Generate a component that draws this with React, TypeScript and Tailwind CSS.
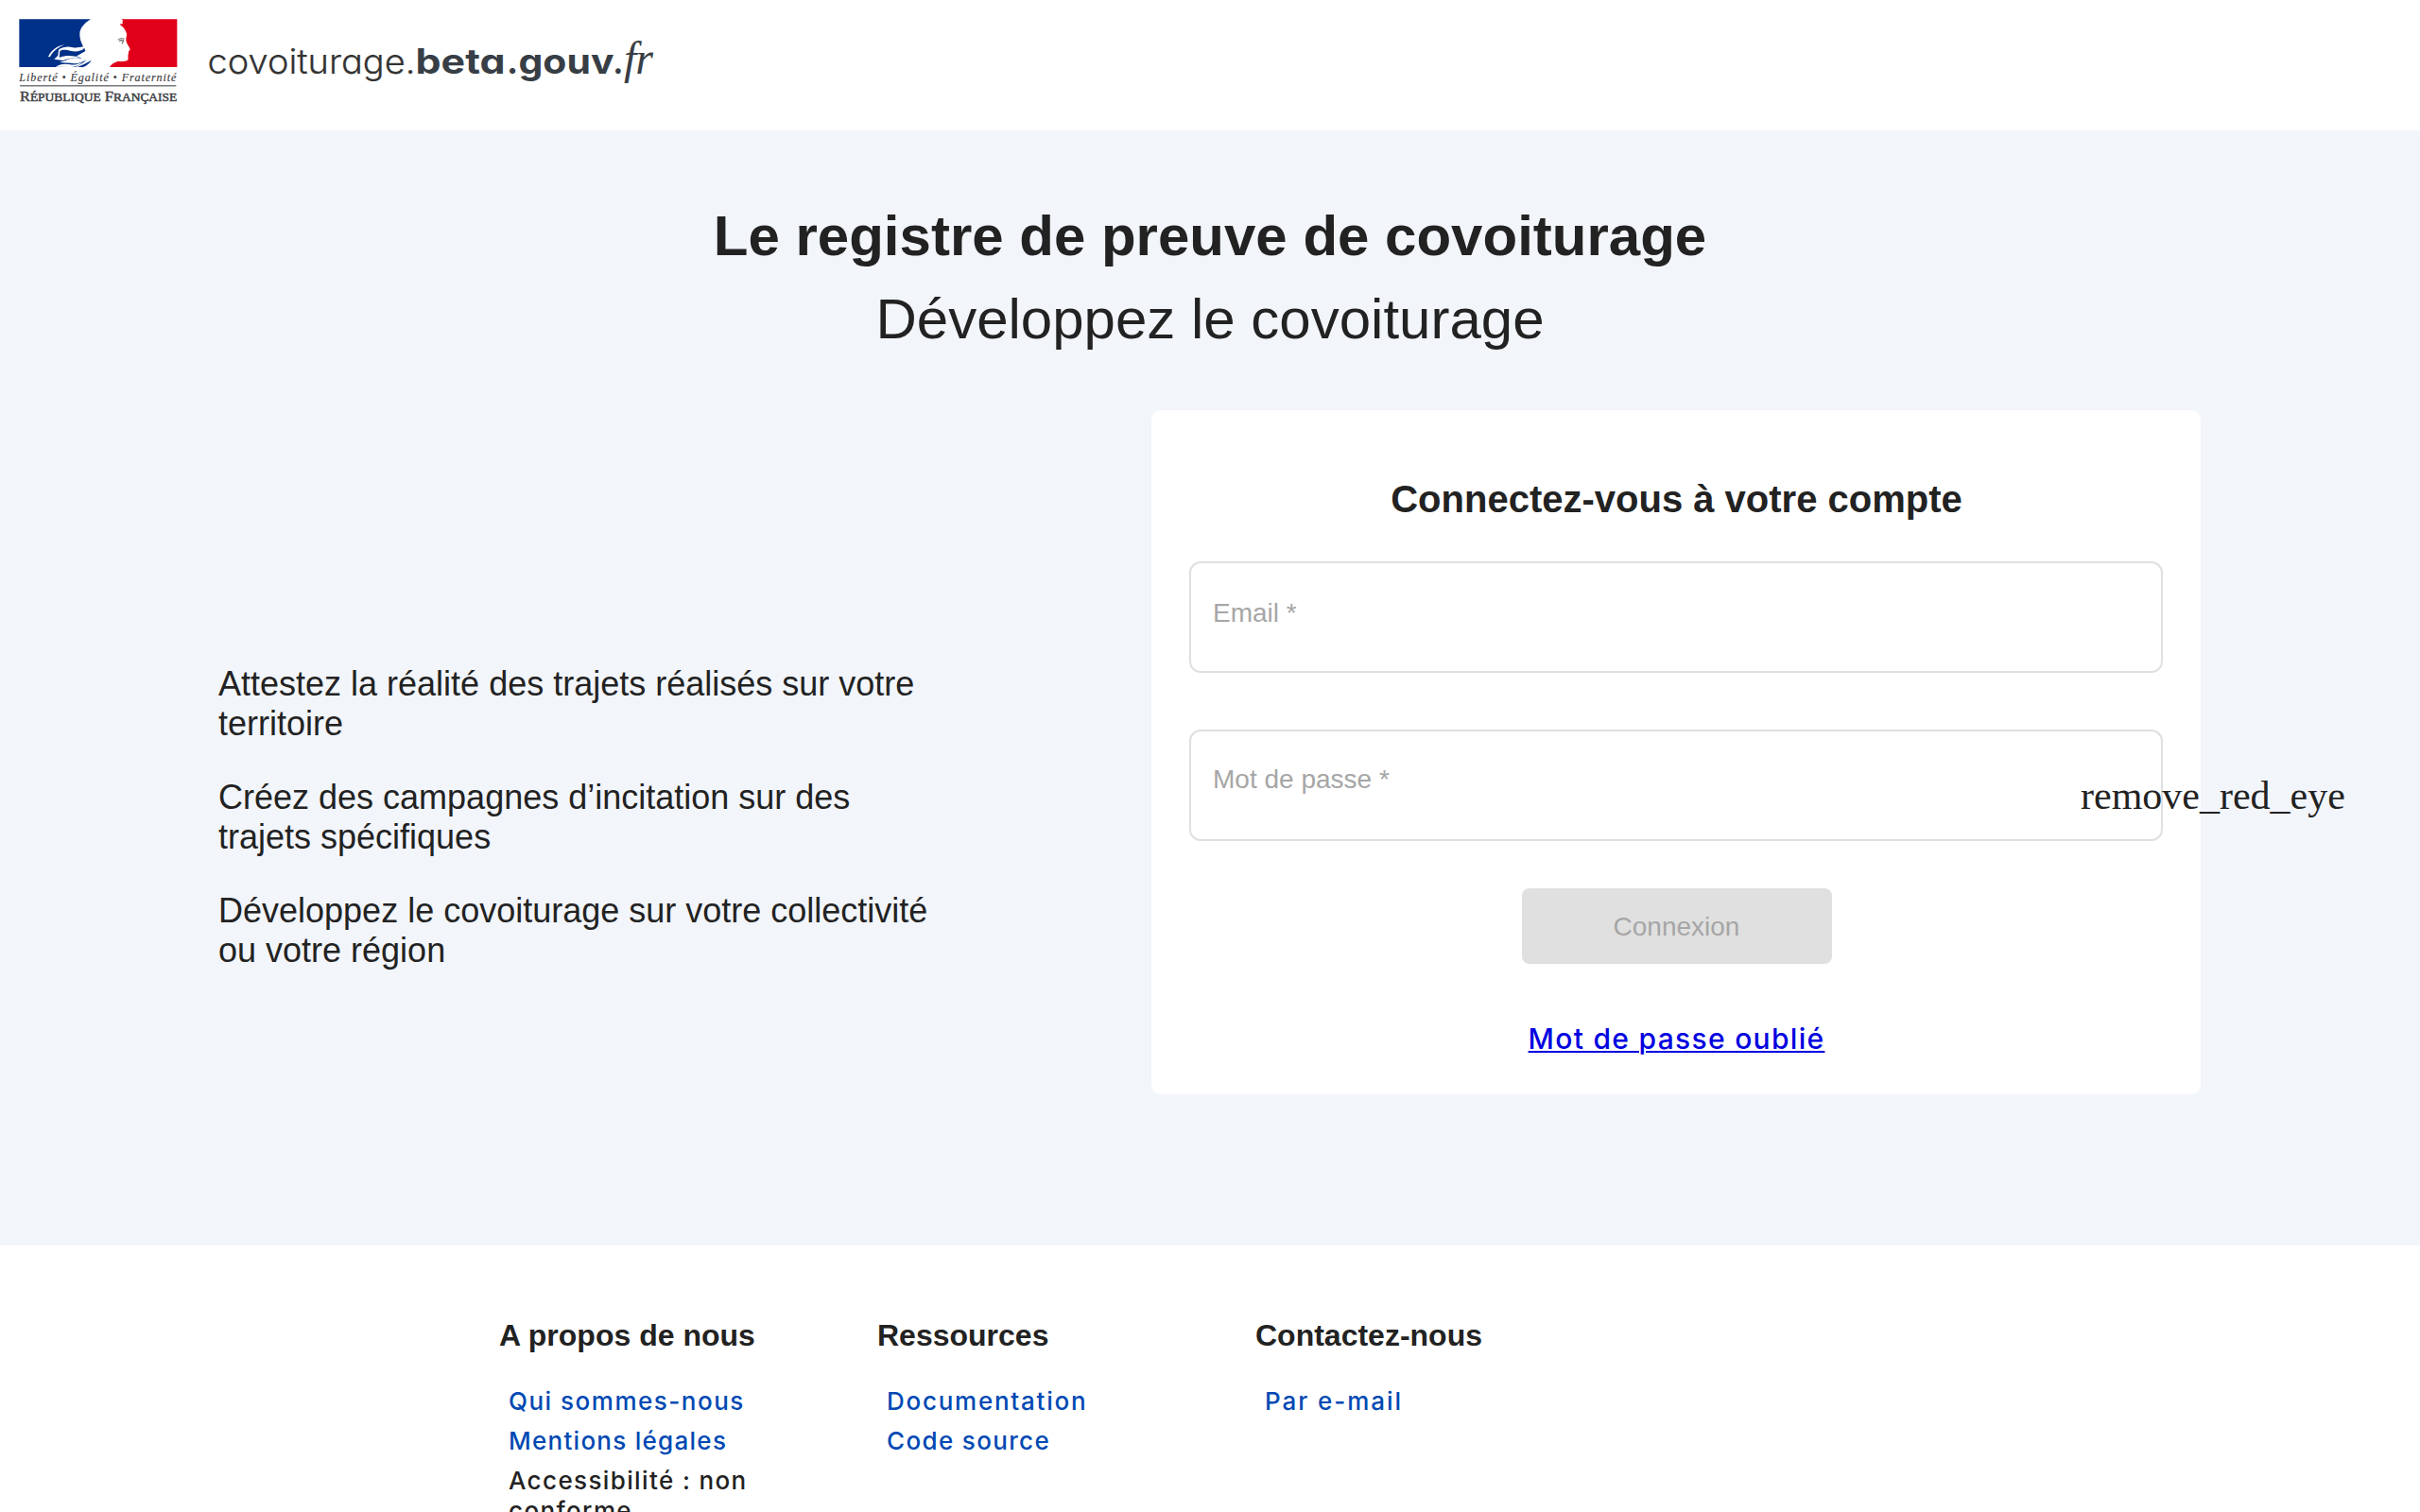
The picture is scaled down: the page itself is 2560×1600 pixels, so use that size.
import React from "react";

const SANS = "font-['Liberation_Sans',Arial,sans-serif]";

function FrenchRepublicLogo() {
  return (
    <svg
      className="ml-5 mt-5 h-[92px] w-[168px] shrink-0"
      viewBox="60 60 504 276"
      role="img"
      aria-label="Liberté, Égalité, Fraternité, République Française"
    >
      {/* Blue panel */}
      <path
        fill="#003189"
        d="M61 61H288C270 72 254 88 253 106C252 121 258 136 264 148C253 150 243 153 232 151C216 146 200 149 190 156C203 150 218 153 230 158C244 163 257 158 268 153L271 162C260 170 248 172 236 175L262 187C244 181 225 184 208 192L189 198C202 200 222 199 236 202C252 202 264 196 274 189C268 198 254 206 240 213H61Z"
      />
      <path fill="#003189" d="M246 213C262 206 278 198 291 191C284 201 276 208 264 213Z" />
      {/* White hair strands */}
      <g fill="#fff">
        <path d="M153 181C160 163 176 147 206 141C184 150 167 163 159 180Z" />
        <path d="M186 158C199 148 219 152 232 157C245 161 257 157 268 154C257 163 241 165 226 162C210 158 199 156 190 162L188 183C210 174 235 176 253 184C232 182 214 186 200 192L172 188L184 176Z" />
        <path d="M176 212C190 203 206 201 224 205C236 207 250 203 262 197C250 210 235 213 222 213Z" />
      </g>
      {/* Blue strand between the white ones */}
      <path fill="#003189" d="M196 162C214 168 240 172 266 160C258 172 246 178 238 178C222 176 206 172 196 162Z" />
      {/* Red panel, bounded by the profile */}
      <path
        fill="#e1001a"
        d="M385 61H562V213H348C354 203 364 197 376 194C388 195 402 196 406 190C408 185 405 181 407 177C404 174 409 172 408 168C406 165 410 162 413 157C411 149 403 141 401 133C398 122 403 116 402 108C400 96 391 84 379 77L390 75L388 68L391 65Z"
      />
      {/* Eye */}
      <g stroke="#777" fill="none">
        <path strokeWidth="3" d="M374 126Q384 119 395 123" />
        <path strokeWidth="4" d="M378 131Q386 125 392 129L387 139" />
      </g>
      <text
        x="61"
        y="257"
        textLength="498"
        fill="#3f4145"
        stroke="#3f4145"
        strokeWidth="0.5"
        fontSize="36"
        fontStyle="italic"
        fontFamily="'Liberation Serif', serif"
      >
        Liberté • Égalité • Fraternité
      </text>
      <path stroke="#77797c" strokeWidth="4.500" d="M63 272.500H559" />
      <text
        x="63"
        y="320"
        textLength="499"
        lengthAdjust="spacingAndGlyphs"
        fill="#3f4145"
        stroke="#3f4145"
        strokeWidth="1.500"
        fontSize="46"
        fontFamily="'Liberation Serif', serif"
      >
        R<tspan fontSize="38">ÉPUBLIQUE</tspan> F<tspan fontSize="38">RANÇAISE</tspan>
      </text>
    </svg>
  );
}

function SiteWordmark() {
  return (
    <svg
      className="ml-[32px] mt-[30px] h-[72px] w-[484px] shrink-0 overflow-visible [font-feature-settings:'cv11']"
      viewBox="220 30 484 72"
      role="img"
      aria-label="covoiturage.beta.gouv.fr"
    >
      <g fontFamily="Inter, sans-serif" fontSize="36.500">
        <text
          x="219.500"
          y="78"
          textLength="220"
          lengthAdjust="spacingAndGlyphs"
          fill="#333"
          stroke="#333"
          strokeWidth="0.2"
          fontWeight="300"
        >
          covoiturage.
        </text>
        <g fill="#383e45" fontWeight="700">
          <text x="439.500" y="78" textLength="95" lengthAdjust="spacingAndGlyphs">
            beta
          </text>
          <text x="536" y="78">.</text>
          <text x="548.500" y="78" textLength="101" lengthAdjust="spacingAndGlyphs">
            gouv
          </text>
        </g>
      </g>
      <text
        x="649"
        y="78"
        textLength="42"
        fill="#383e45"
        fontSize="48"
        fontStyle="italic"
        fontFamily="'Liberation Serif', serif"
      >
        .fr
      </text>
    </svg>
  );
}

function Field({ label, labelTop, trailing }: { label: string; labelTop: string; trailing?: string }) {
  return (
    <div className="relative h-[118px] w-[1030px] rounded-xl border-2 border-[#e0e0e0] px-[23px]">
      <label className={`block text-[28px] leading-8 text-[#a6a6a6] ${labelTop}`}>{label}</label>
      {trailing && (
        <span className="absolute left-[941px] top-[44px] font-['Liberation_Serif',serif] text-[42px] leading-[48px] text-[#222]">
          {trailing}
        </span>
      )}
    </div>
  );
}

const benefits = [
  ["Attestez la réalité des trajets réalisés sur votre", "territoire"],
  ["Créez des campagnes d’incitation sur des", "trajets spécifiques"],
  ["Développez le covoiturage sur votre collectivité", "ou votre région"],
];

type FooterItem = { text: string; spacing: string; plain?: boolean };

const footerColumns: { title: string; items: FooterItem[] }[] = [
  {
    title: "A propos de nous",
    items: [
      { text: "Qui sommes-nous", spacing: "tracking-[1.5px]" },
      { text: "Mentions légales", spacing: "tracking-[1.27px]" },
      { text: "Accessibilité : non conforme", spacing: "tracking-[1.38px]", plain: true },
    ],
  },
  {
    title: "Ressources",
    items: [
      { text: "Documentation", spacing: "tracking-[1.75px]" },
      { text: "Code source", spacing: "tracking-[1.35px]" },
    ],
  },
  { title: "Contactez-nous", items: [{ text: "Par e-mail", spacing: "tracking-[1.95px]" }] },
];

export default function App() {
  return (
    <div className={`flex h-[1600px] w-[2560px] flex-col overflow-hidden bg-white text-[#222] ${SANS}`}>
      <header className="flex h-[138px] shrink-0 items-start">
        <FrenchRepublicLogo />
        <SiteWordmark />
      </header>

      <main className="h-[1180px] shrink-0 bg-[#f2f5fa] pt-[68px]">
        <div className="text-center text-[60px] leading-[88px]">
          <h1 className="font-bold">Le registre de preuve de covoiturage</h1>
          <h2>Développez le covoiturage</h2>
        </div>

        <div className="mt-[52px] flex items-start pl-[231px]">
          <div className="mt-[269px] flex w-[987px] flex-col gap-9 text-[36px] leading-[42px]">
            {benefits.map(([first, second]) => (
              <p key={first}>
                {first}
                <br />
                {second}
              </p>
            ))}
          </div>

          <form className="flex h-[724px] w-[1110px] flex-col rounded-[10px] bg-white pl-10 pr-[39px] pt-[70px]">
            <h3 className="text-center text-[40px] font-bold leading-[48px]">Connectez-vous à votre compte</h3>
            <div className="mt-[42px] flex flex-col gap-[60px]">
              <Field label="Email *" labelTop="mt-[37px]" />
              <Field label="Mot de passe *" labelTop="mt-[35px]" trailing="remove_red_eye" />
            </div>
            <button
              type="button"
              disabled
              className="mt-[50px] h-20 w-[328px] self-center rounded-lg bg-[#e0e0e0] pt-0.5 text-[28px] text-[#a6a6a6]"
            >
              Connexion
            </button>
            <a
              href="#"
              className="mt-[60px] self-center font-[Inter,sans-serif] text-[30px] font-medium leading-[38px] tracking-[1.3px] text-[#0000e0] underline decoration-2 underline-offset-[2px]"
            >
              Mot de passe oublié
            </a>
          </form>
        </div>
      </main>

      <footer className="flex pl-[528px] pt-[76px]">
        {footerColumns.map((column) => (
          <section key={column.title} className="w-[400px]">
            <h4 className="text-[32px] font-bold leading-[38px]">{column.title}</h4>
            <ul className="ml-2.5 mt-[35px] w-[280px] font-[Inter,sans-serif] text-[26px] font-medium leading-8">
              {column.items.map((item) => (
                <li
                  key={item.text}
                  className={`mb-2.5 ${item.spacing} ${item.plain ? "text-[#222]" : "text-[#0049b3]"}`}
                >
                  {item.text}
                </li>
              ))}
            </ul>
          </section>
        ))}
      </footer>
    </div>
  );
}
